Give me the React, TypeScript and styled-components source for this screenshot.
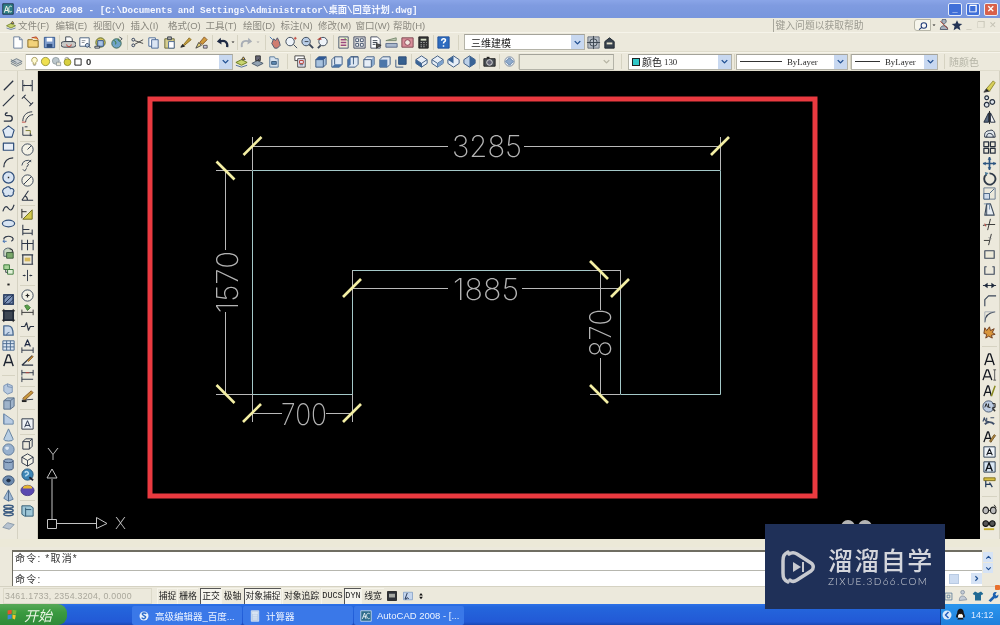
import React from "react";
import styled, { createGlobalStyle } from "styled-components";

const Global = createGlobalStyle`
  html, body { margin: 0; padding: 0; background: #ece9d8; overflow: hidden; }
  * { box-sizing: border-box; }
`;

const CJK = `"Liberation Sans", "Noto Sans CJK SC", sans-serif`;
const MONO = `"Liberation Mono", "Noto Sans CJK SC", monospace`;

type P = [string, string?, string?, number?];
const D = "#3c4450", B = "#3f6db0", G = "#8a8f98", LB = "#b9cde6", R = "#c0443c", GR = "#4d9a45";
const I: Record<string, P[]> = {
  doc: [["M4 2h6l3 3v9H4z", "#6c7f9a", "#fff"], ["M10 2v3h3", "#6c7f9a"]],
  open: [["M2 5h5l1 1h5v7H2z", "#8a6a1e", "#f2d27a"], ["M6 3l5-1 2 3", "#b23c2c", "#e8a040"]],
  save: [["M2.5 2.5h11v11h-11z", "#31568f", "#7e9ccb"], ["M5 3h6v4H5z", "", "#fff"], ["M5 9.5h6v4H5z", "", "#2f4f80"]],
  plot: [["M5 2h5l2 2v3H5z", D, "#fff"], ["M3 7h10a1.5 1.5 0 0 1 0 6H3a1.5 1.5 0 0 1 0-6z", D, "#c9c9c6"], ["M6 10a2.5 2.5 0 1 0 5 0", R]],
  preview: [["M3 3h10v9H3z", "#48607f", "#fff"], ["M5 6h4M5 8h3", G], ["M11 9a2 2 0 1 0 .01 0zM12.5 12l2 2", "#2a3d5c", LB]],
  publish: [["M3 8a5 5 0 1 1 10 0a5 5 0 1 1-10 0z", "#5b6a2c", "#d4c25a"], ["M5 6h6v6H5z", "#34558f", "#a9c3e6"], ["M2 12h5v2H2z", D, "#ddd"]],
  web: [["M3 9a5 5 0 1 1 10 0a5 5 0 1 1-10 0z", "#3f6a55", "#6fa3c8"], ["M5 6c2 0 3 2 2 4M10 4c-1 2 1 3 2 3", "#3c7a35"], ["M11 2l3 2-2 2", D]],
  cut: [["M2 5a1.5 1.5 0 1 0 3 0a1.5 1.5 0 1 0-3 0zM2 11a1.5 1.5 0 1 0 3 0a1.5 1.5 0 1 0-3 0z", "#2c3a55"], ["M5 6l9 3M5 10l9-5", "#444"]],
  copy: [["M3 3h7v9H3z", "#4c6a96", "#fff"], ["M6 5h7v9H6z", "#4c6a96", "#dbe6f4"]],
  paste: [["M3 4h10v10H3z", "#6a6a3c", "#d8cf8f"], ["M6 2h4v3H6z", D, "#aaa"], ["M7 7h6v7H7z", "#4c6a96", "#fff"]],
  brush: [["M3 13l2-3 2 2z", "#222", "#222"], ["M6 10l6-7 2 2-7 6z", "#8a6a1e", "#c8a23c"]],
  match: [["M2 14l3-6 3 3z", "#444", "#e8d67a"], ["M6 8l5-6 3 3-5 5z", "#8a5a2c", "#d09a3c"], ["M10 11h4v3h-4z", "#555", "#c8c0e0"]],
  undo: [["M13 13c1-6-3-8-8-6", "#1f2a44", "", 2.4], ["M6 3L2 7l5 3z", "", "#1f2a44"]],
  redo: [["M3 13C2 7 6 5 11 7", "#a8adb5", "", 2], ["M10 3l4 4-5 3z", "", "#a8adb5"]],
  caret: [["M5 7h6l-3 3z", "", "#222"]],
  caretOff: [["M5 7h6l-3 3z", "", "#aaa"]],
  pan: [["M4 9l2-5 2 2 2-3 2 4 1 4-3 3H7z", "#49586f", "#cf7c70"], ["M2 2l3 3", B]],
  zoomrt: [["M2 7a4.5 4.5 0 1 0 9 0a4.5 4.5 0 1 0-9 0zM10 10l4 4", "#3a4658", "#eef3f8"], ["M12 2v3M10.5 3.5h3", R]],
  zoomwin: [["M2 7a4.5 4.5 0 1 0 9 0a4.5 4.5 0 1 0-9 0z", "#3a4658", LB], ["M10 10l4 4", "#3a4658", "", 2], ["M5 7h4", D]],
  zoomprev: [["M3 7a4.5 4.5 0 1 0 9 0a4.5 4.5 0 1 0-9 0z", "#3a4658", "#eef3f8"], ["M5 11L2 14", "#3a4658", "", 2], ["M1 5l4-3 1 3z", "", "#b04038"]],
  props: [["M3 2h10v12H3z", "#49586f", "#f2ecd4"], ["M5 5h6M5 8h6M5 11h6", "#9a4a80", "", 1.6], ["M9 3l3 3", GR]],
  design: [["M2 2h12v12H2z", "#444c60", "#ddd"], ["M4 4h3v3H4zM9 4h3v3H9zM4 9h3v3H4zM9 9h3v3H9z", "#49586f", "#fff"]],
  sheet: [["M3 2h7l3 3v9H3z", "#444c60", "#fff"], ["M5 6h5M5 8h5M5 10h3", D], ["M9 9l5 2-5 3z", "#333", "#555"]],
  tool: [["M2 6l11-3v3z", "#7a8a70", "#bcc8b0"], ["M2 9h12v4H2z", "#5d6c8a", "#aab8cc"]],
  markup: [["M2 3h12v10H2z", "#7c4850", "#d88c98"], ["M5 8a3 3 0 1 1 6 0a3 3 0 1 1-6 0z", "#884050", "#f3e6e0"]],
  calc: [["M3 2h10v12H3z", "#222", "#333"], ["M5 4h6v2H5z", "", "#d8e0c8"], ["M5 8h1M8 8h1M11 8h.5M5 10.5h1M8 10.5h1M11 10.5h.5M5 12.5h1M8 12.5h1", "#eee"]],
  help: [["M2 2h12v12H2z", "#1f4f9a", "#2e6cc0"], ["M6 6c0-3 5-2.5 4 0-.5 1.2-2 1.2-2 3M8 11v1.5", "#fff", "", 1.6]],
  wsset: [["M2 2h12v12H2z", "#66707c", "#b8bfc6"], ["M4 8a4 4 0 1 0 8 0a4 4 0 1 0-8 0zM8 1v14M1 8h14", "#3b454f"]],
  wsfull: [["M3 7l5-4 5 4v7H3z", "#1f2730", "#39434f"], ["M5 8h6v2H5z", "", "#e6e2cc"]],
  layers: [["M8 5l6 3-6 3-6-3z", "#6c7a84", "#c9ced2"], ["M2 10l6 3 6-3", "#6c7a84"], ["M2 6l6 3", "#6c7a84"]],
  layerset: [["M2 9l6-3 6 3-6 3z", "#66781c", "#c8d470"], ["M2 12l6 2 6-2", "#4a6a9a"], ["M10 3l2 3h-4z", "#444", "#f0c040"]],
  layerprev: [["M2 10l6-3 6 3-6 3z", "#4c5a6a", "#93a3b3"], ["M6 2h5v5H6z", "#333", "#667"], ["M8 7l2-2", "#333"]],
  layeriso: [["M4 3h5l1 2h3v9H4z", "#597a9a", "#d6e2ee"], ["M6 8h5v3H6z", "#3a5a7a", "#5f8ab4"]],
  view: [["M2 2h10v5H2z", "#444", "#fff"], ["M5 5h8v9H5z", "#444", "#eef"], ["M7 7h4v3H7z", "#b03a2e"], ["M7 11.5h4", D]],
  cTop: [["M3 6l3-3h8v8l-3 3H3z", "#3d5a80", "#a8c2de"], ["M3 6h8v8M11 6l3-3", "#3d5a80"], ["M3 6l3-3h8l-3 3z", "", "#2f5a96"]],
  cBot: [["M3 6l3-3h8v8l-3 3H3z", "#3d5a80", "#dfe8f3"], ["M3 14l3-3h8l-3 3z", "", "#4a74a8"], ["M6 3v8", "#3d5a80"]],
  cLeft: [["M3 6l3-3h8v8l-3 3H3z", "#3d5a80", "#dfe8f3"], ["M3 6l3-3v8l-3 3z", "", "#4a74a8"], ["M9 3v8M6 3h8", "#3d5a80"]],
  cRight: [["M3 6l3-3h8v8l-3 3H3z", "#3d5a80", "#e7eef7"], ["M11 6l3-3v8l-3 3z", "", "#88a8cc"], ["M3 6h8v8", "#3d5a80"]],
  cFront: [["M3 6l3-3h8v8l-3 3H3z", "#3d5a80", "#dfe8f3"], ["M3 6h8v8H3z", "", "#4c76aa"]],
  cBack: [["M6 3h8v8H6z", "#2c4c78", "#36608f"], ["M3 6v8h8", "#3d5a80"]],
  d1: [["M8 2l6 4v4l-6 4-6-4V6z", "#3d5a80", "#e7eef7"], ["M2 6l6 4 6-4M8 10v4", "#3d5a80"], ["M2 6l6 4v4l-6-4z", "", "#3a6496"]],
  d2: [["M8 2l6 4v4l-6 4-6-4V6z", "#3d5a80", "#e7eef7"], ["M2 6l6 4 6-4M8 10v4", "#3d5a80"], ["M8 10l6-4v4l-6 4z", "", "#7ea2cc"]],
  d3: [["M8 2l6 4v4l-6 4-6-4V6z", "#3d5a80", "#e7eef7"], ["M2 6l6-4v4v4z", "", "#3a6496"]],
  d4: [["M8 2l6 4v4l-6 4-6-4V6z", "#3d5a80", "#bcd0e8"], ["M8 2l6 4v4l-6 4z", "", "#3a6496"]],
  camera: [["M2 5h12v8H2z", "#222", "#4a4f55"], ["M5 9a3 3 0 1 0 6 0a3 3 0 1 0-6 0z", "#ddd", "#667"], ["M5 3h3v2H5z", "", "#222"]],
  vp: [["M3 8a5 5 0 1 0 10 0a5 5 0 1 0-10 0z", "#7b8aa0", "#e7ebf0"], ["M8 4l4 4-4 4-4-4z", "#5d7fa8", "#8faacc"]],
  line: [["M3 13L13 3", "#2b3444", "", 1.4]],
  xline: [["M2 14L14 2", "#2b3444", "", 1.4]],
  pline: [["M3 13h6c4 0 4-6 0-6H6c-2 0-2-3 1-3", "#2b3444", "", 1.4]],
  polygon: [["M8 2l6 4.5-2.3 7.5H4.3L2 6.5z", "#2f4e7a", "#dfe9f5", 1.2]],
  rect: [["M2.5 4.5h11V12h-11z", "#2f4e7a", "#e8eef6", 1.3]],
  arc: [["M3 13C3 7 7 3 13 3", "#2b3444", "", 1.4]],
  circle: [["M2 8a6 6 0 1 0 12 0a6 6 0 1 0-12 0z", "#2f4e7a", "#d8e4f2", 1.3], ["M8 7.2v1.6", "#222", "", 1.5]],
  cloud: [["M5 3c2-2 5-1 5 1 3-1 5 2 3 4 1 3-3 5-5 3-2 2-6 1-5-2-2-1-2-5 2-6z", "#2f4e7a", "#d8e4f2", 1.2]],
  spline: [["M2 11c2-6 4-6 6-3s4 2 6-4", "#2b3444", "", 1.2]],
  ellipse: [["M1.5 8a6.5 3.5 0 1 0 13 0a6.5 3.5 0 1 0-13 0z", "#2f4e7a", "#d8e4f2", 1.3]],
  ellarc: [["M3 9a5 3 0 1 1 8 2", "#2b3444", "", 1.3], ["M6 11H2M4 9.5L2 11l2 1.5", B]],
  insert: [["M3 5a5 4 0 0 1 9-1v7H3z", "#546070", "#c8d6c0", 1], ["M6 7h7v6H6z", "#3a5a3a", "#7aa86a"], ["M9 3a4 4 0 0 1 4 4", "#333"]],
  block: [["M3 3h6v5H3z", "#3b7b3b", "#a8d498"], ["M7 8h6v5H7z", "#3b7b3b", "#e0f0d8"], ["M5 8v3h2", D]],
  dot: [["M8 7v2", "#222", "", 2.4]],
  hatch: [["M3 3h10v10H3z", "#35486a", "#7d93b8", 1.8], ["M3 8l5-5M8 13l5-5M3 13L13 3", "#1d2f50"]],
  gradient: [["M3 3h10v10H3z", "#222b3a", "#3e4754", 1.8], ["M1 3h2M13 3h2M1 13h2M13 13h2M3 1v2M13 1v2M3 13v2M13 13v2", "#222"]],
  region: [["M3 13V3h5c4 0 5 5 5 10z", "#4a6a90", "#c9d8ea", 1.4], ["M6 13a3 3 0 0 1 3-3", "#4a6a90"]],
  table: [["M2 3h12v10H2z", "#4a6a90", "#dce7f3"], ["M2 6h12M2 9.5h12M6 3v10M10 3v10", "#4a6a90"]],
  textA: [["M3 14L7 2h2l4 12M5 10h6", "#1c2330", "", 1.6]],
  box1: [["M7 3l5 2v7l-5 2-4-3V5z", "#7b93b4", "#b7c9df"], ["M7 3v3l5 1", "#7b93b4"]],
  box2: [["M3 5l4-3h7v9l-4 3H3z", "#5a6f8a", "#9fb3ca"], ["M3 5h7v9M10 5l4-3", "#5a6f8a"]],
  wedge: [["M3 3l10 7v4H3z", "#6a86a8", "#b9cce3"], ["M3 3v11", "#6a86a8"]],
  cone: [["M8 2l5 11a5 2 0 0 1-10 0z", "#62809e", "#b9cfe4"]],
  sphere: [["M2 8a6 6 0 1 0 12 0a6 6 0 1 0-12 0z", "#5e7a9a", "#97b0cd"], ["M5 5a2 2 0 1 0 3 0z", "", "#dde7f2"]],
  cyl: [["M3 4a5 2 0 0 1 10 0v8a5 2 0 0 1-10 0z", "#41587a", "#8fa8c6"], ["M3 4a5 2 0 0 0 10 0", "#41587a"]],
  torus: [["M2 8a6 5 0 1 0 12 0a6 5 0 1 0-12 0z", "#3e5678", "#6d8bae"], ["M6 8a2 1.5 0 1 0 4 0a2 1.5 0 1 0-4 0z", "#20314a", "#1f2e44"]],
  pyramid: [["M8 2l5 10-5 2-5-3z", "#5e7c9e", "#9fb9d4"], ["M8 2v12", "#486484"]],
  helix: [["M3 4c0-2 10-2 10 0s-10 2-10 0M3 8c0-2 10-2 10 0s-10 2-10 0M3 12c0-2 10-2 10 0s-10 2-10 0", "#3a5a80", "", 1.6]],
  plane: [["M2 10l5-5 7 2-5 5z", "#8897a8", "#b7c3d0"]],
  dLinear: [["M3 2v12M13 2v12M3 8h10", "#2b3444", "", 1.1], ["M3 8l2-1v2zM13 8l-2-1v2z", "", "#2b3444"]],
  dAligned: [["M2 6l4-4M10 14l4-4M4 4l8 8", "#2b3444", "", 1.1]],
  dArc: [["M3 13C3 7 7 3 13 3", "#2b3444"], ["M6 14C6 10 10 6 14 6", "#2b3444"], ["M2 14h4", R]],
  dOrd: [["M3 3v9h10", "#2b3444"], ["M6 7h5v4", "#7a7a2a"], ["M5 3h3M11 13v-3", "#2b3444"]],
  dRad: [["M2 8a6 6 0 1 0 12 0a6 6 0 1 0-12 0z", "#3a4658", "#f4f2e6"], ["M8 8l4-4", "#2b3444"]],
  dJog: [["M2 8a6 6 0 0 1 10-4", "#3a4658"], ["M7 10l2-3-1-1 4-4", "#2b3444"], ["M3 12l2 2 2-3", "#3a4658"]],
  dDia: [["M2 8a6 6 0 1 0 12 0a6 6 0 1 0-12 0z", "#3a4658", "#f4f2e6"], ["M4 12l8-8", "#2b3444"]],
  dAng: [["M2 13h12M2 13L9 3M5 8c2 1 3 3 3 5", "#2b3444", "", 1.1]],
  dQuick: [["M3 13L13 3v10z", "#6b6b1f", "#d4ca4c"], ["M2 2v10M2 5h5", "#222"]],
  dBase: [["M3 3v11M13 8v6M3 12h10M3 8h7", "#2b3444", "", 1.1]],
  dCont: [["M2 3v11M8 3v11M14 3v11M2 7h12", "#2b3444", "", 1.1]],
  dSpace: [["M2 3h12M2 13h12M3 3v10M13 3v10", "#2b3444", "", 1.2], ["M5 6h6v4H5z", "", "#d8b95c"]],
  dBreak: [["M3 8h3M10 8h3M8 2v12", "#2b3444"], ["M3 8l2-1v2zM13 8l-2-1v2z", "", "#2b3444"]],
  dCenter: [["M2 8a6 6 0 1 0 12 0a6 6 0 1 0-12 0z", "#3a4658", "#f4f2e6"], ["M6 8h4M8 6v4", "#222", "", 1.3]],
  dInspect: [["M2 10h12M2 7v6M14 7v6", "#333"], ["M5 3l3-1 3 3-3 3z", "#3c7a35", "#5ca04a"]],
  dJogLine: [["M1 8h4l2-4 2 8 2-4h4", "#2b3444", "", 1.2]],
  dText: [["M2 13h12M2 10v6M14 10v6", "#2b3444"], ["M5 9l3-7 3 7M6 7h4", "#1f2a44", "", 1.3]],
  dAngEdit: [["M2 13h12M2 13L13 3", "#2b3444", "", 1.3], ["M8 8l5-5 1 1-5 5z", "#8a5a2c", "#c89a3c"]],
  dUpdate: [["M2 12h12M2 9v6", "#2b3444"], ["M2 5h12M2 2v6M14 2v6", "#2b3444"], ["M6 5h4", R]],
  dStyle: [["M2 13l12-1", "#2b3444"], ["M3 11l9-8 2 2-9 8z", "#8a5a2c", "#c89a3c"], ["M2 14h5", "#222", "", 2]],
  frameA: [["M2 3h12v11H2z", "#2b3444", "#eef2f6"], ["M5 12l3-7 3 7M6 10h4", "#1f2a44"]],
  wire1: [["M3 6l3-3h7v8l-3 3H3z", "#2b3444"], ["M3 6h7v8M10 6l3-3", "#2b3444"]],
  wire2: [["M8 2l6 3.5v6L8 15l-6-3.5v-6z", "#2b3444", "#f4f2e6"], ["M2 5.5L8 9l6-3.5M8 9v6", "#2b3444"]],
  globeC: [["M2 8a6 6 0 1 0 12 0a6 6 0 1 0-12 0z", "#28567a", "#3d86b6"], ["M5 6c2-2 4-1 4 1s-3 1-3 3", "#b8dcef", "", 1.6], ["M10 11l4 3", "#223", "", 2]],
  render: [["M1 9a7 5.5 0 1 0 14 0a7 5.5 0 1 0-14 0z", "#4e3e88", "#5a48b0"], ["M3 7a5 3.5 0 0 1 10 0z", "", "#e8b830"]],
  camBook: [["M2 3h9l3 2v9H5l-3-2z", "#2f5a72", "#9ec6d6"], ["M6 5v9M6 7h6", "#2f5a72"]],
  erase: [["M2 14l3-4 3 3z", "#444", "#222"], ["M5 10l7-8 2 2-6 9z", "#8f8a2e", "#d8cf58"]],
  eCopy: [["M5 2a2 2 0 1 1-.01 0zM11 6a2.5 2.5 0 1 1-.01 0zM5 9a2.5 2.5 0 1 1-.01 0z", "#263040", "#dfe5ea", 1.3]],
  mirror: [["M8 1v14", "#222", "", 1], ["M7 3v10H2z", "#1f2a3c", "#5a6a80"], ["M9 3v10h5z", "#1f2a3c", "#f2f2f2"]],
  offset: [["M3 13c-1-4 1-7 5-7 4-2 6 2 6 7z", "#1f2a3c", "#dfe5ea"], ["M5 13c0-3 1-4 3-4s4 1 4 4", "#1f2a3c"]],
  array: [["M2 2h5v5H2zM9 2h5v5H9zM2 9h5v5H2zM9 9h5v5H9z", "#27303e", "", 1.3]],
  move: [["M8 1v14M1 8h14", "#2c5580", "", 1.8], ["M8 1L6 4h4zM8 15l-2-3h4zM1 8l3-2v4zM15 8l-3-2v4z", "", "#2c5580"]],
  rotate: [["M5 3.5a6 6 0 1 0 3-1", "#2f3a48", "", 2], ["M3 1l4 1-3 3z", "", "#4a7a9a"]],
  scale: [["M2 2h12v12H2z", "#6a7c90"], ["M2 8h6v6H2z", "#4a6484", "#cfdcec"], ["M8 8l5-5", "#4a6484"]],
  stretch: [["M5 2h4l4 12H3z", "#3c4a5c", "#e6ecf2", 1.2], ["M5 2v12", "#3c4a5c"], ["M2 2h6v6", "#7790aa"]],
  trim: [["M1 9l5-1h8", "#333", "", 1], ["M9 2L6 14", "#333"], ["M3 7l1 3", R]],
  extend: [["M2 9h6", "#333", "", 1], ["M10 2L7 14", "#333"], ["M7 6l3 1", "#888"]],
  breakPt: [["M3 4h10v8H3z", "#3a4658", "#ece9d8", 1.2]],
  breakRect: [["M5 4H3v8h10V4h-2", "#3a4658", "", 1.2]],
  join: [["M1 8h14", "#1f2a3c", "", 1], ["M2 8l4-3v6zM14 8l-4-3v6z", "", "#1f2a3c"]],
  chamfer: [["M3 14V7l4-4h8", "#3a4658", "", 1.2]],
  fillet: [["M3 14c0-7 4-10 11-11", "#3a4658", "", 1.2], ["M3 14V3h11", "#a8adb5"]],
  explode: [["M3 4l2 3 3-4 1 4 4-2-2 4 3 2-4 1 1 3-4-2-3 2 1-4-3-1z", "#6e3c1e", "#d8963c"]],
  tA: [["M3 14L7 2h2l4 12M5 10h6", "#12161e", "", 1.5]],
  tAI: [["M1 14L5 3h1.5l4 11M3 10.5h5.5", "#12161e", "", 1.4], ["M12 3h3M12 14h3M13.5 3v11", "#555"]],
  tAS: [["M2 14L6 3h1l3 11M3.5 10h5", "#12161e", "", 1.4], ["M10 14l4-11", "#8a8a20", "", 1.6]],
  abc: [["M1 9a6 6 0 1 0 12 0a6 6 0 1 0-12 0z", "#4a5a70", "#bccbe0"], ["M3 10l1.5-4L6 10M7 6v4h2M11 6h3v4h-3", "#222"], ["M11 11l3 3", "#333", "", 1.6]],
  ABC: [["M1 9l1.5-4L4 9M5 5v4h2.5M9 5h4", "#40506a", "", 1.2], ["M3 12c3-3 7-3 10 0", "#40506a", "", 2]],
  tEdit: [["M2 14L6 3h1l3 11M3.5 10h5", "#12161e", "", 1.4], ["M8 13l5-7 1.5 1-5 7z", "#7a5a2c", "#b08c3c"]],
  fA1: [["M2 3h12v11H2z", "#2a3c52", "#eef3f8"], ["M5 12l3-7 3 7M6 10h4", "#12161e", "", 1.1]],
  fA2: [["M2 3h12v11H2z", "#2a3c52", "#d8e6f4"], ["M4 13l3.5-9 3.5 9M5.5 10h4", "#12161e", "", 1.5]],
  tTable: [["M2 3h12v3H2z", "#7e6e1e", "#d8c040"], ["M4 6v7M4 10h6M8 8l3 5", "#233a5a", "", 1.3]],
  ref1: [["M1 9a3 3.5 0 1 0 6 0a3 3.5 0 1 0-6 0zM9 9a3 3.5 0 1 0 6 0a3 3.5 0 1 0-6 0z", "#222", "#bbb", 1.2], ["M7 9h2M13 3l2 3", "#222"]],
  ref2: [["M1 7a3 3 0 1 0 6 0a3 3 0 1 0-6 0zM8 7a3 3 0 1 0 6 0a3 3 0 1 0-6 0z", "#111", "#555", 1.2], ["M2 12h11v2H2z", "", "#c8b030"]],
  bulb: [["M8 2a4 4 0 0 1 2 7.5V12H6V9.5A4 4 0 0 1 8 2z", "#8a7a30", "#fffbd0"], ["M6.5 13.5h3", "#777"]],
  sun: [["M2 8a6 6 0 1 0 12 0a6 6 0 1 0-12 0z", "#7a7a20", "#f0e050"]],
  frz: [["M2 7a5 5 0 1 0 10 0a5 5 0 1 0-10 0z", "#7f8a90", "#bcc7cc"], ["M8 9h6v5H8z", "#7f8a90", "#ece9d8"]],
  lock: [["M3 9a5 5 0 1 0 10 0a5 5 0 1 0-10 0z", "#7a7a20", "#d8d040"], ["M4 5a3 3 0 0 1 6 0", "#777"]],
  sq: [["M3 3h10v10H3z", "#111", "#fff", 1.4]],
  search: [["M6 8a4 4 0 1 0 8 0a4 4 0 1 0-8 0zM6.5 11L3 14", "#1f3a78", "#f6f6f6", 1.5]],
  comm: [["M5 3a3 3 0 1 1 6 0c0 2-3 4-3 4S5 5 5 3zM3 14c0-4 3-5 5-5s5 1 5 5z", "#3a4658", "#a8b0bc", 1], ["M3 3l10 10", "#b03020"]],
  star: [["M8 1.5l2 4.5 5 .5-3.8 3.2 1.3 5.3L8 12.3 3.5 15l1.3-5.3L1 6.5 6 6z", "", "#243454"]],
  cmdIcon: [["M2 2h12v12H2z", "#111", "#2e3138"], ["M4 5h8v5H4z", "", "#a6a8a2"]],
  annot: [["M2 3h12v10H2z", "#7f9cc4", "#c5d6ee"], ["M7 4l-3 8h2l1-2 2 2", "#1a2a4a", "", 1.2]],
  arrowsV: [["M8 3l3 4H5zM8 13l3-4H5z", "", "#111"]],
  trayA: [["M3 3h10v10H3z", "#42698e"], ["M6 6h4v4H6z", "#42698e"]],
  trayB: [["M5 3a2.5 2.5 0 1 1 5 0a2.5 2.5 0 1 1-5 0zM3 14c0-4 2-6 4-6s5 1 6 5z", "#7c8a9c", "#c5ccd6"]],
  shirt: [["M4 2l4 2 4-2 3 3-2 2-1-1v8H4V6L3 7 1 5z", "", "#216a94"]],
  wrench: [["M2 14l6-6c-1-3 1-6 5-5l-2 3 2 2 2-2c1 3-2 6-5 5l-5 5z", "", "#1d62b0"]],
  start: [["M2 3l5-1v5l-5 1z", "", "#e8552c"], ["M8 2l5 1-1 5-4-1z", "", "#78b83a"], ["M2 9l5-1v5l-5 1z", "", "#3a86d8"], ["M8 8l4 1-1 5-3-1z", "", "#f4c430"]],
  sogou: [["M2 8a6 6 0 1 0 12 0a6 6 0 1 0-12 0z", "", "#eaf2fb"], ["M11 5C9 3 5 4 6 6s5 2 4 4-4 2-5 0", "#2b6ccc", "", 2]],
  calcDoc: [["M3 1h10v14H3z", "#dfe8f4", "#b8cbe5"], ["M5 3h6v2H5zM5 7h6M5 9.5h6M5 12h6", "#eff4fb"]],
  acad: [["M1 1h14v14H1z", "#d8e6f3", "#2e6c8c"], ["M3 12l3-8 2 8M4 9h4M13 5c-3-2-5 1-4 4s3 3 4 2", "#f0f5f8", "", 1.1]],
  acad0: [["M1 1h14v14H1z", "#123", "#2f7f86"], ["M3 13l3-9 3 9M4 10h4M13 5c-2-2-4 0-4 3s2 5 4 3", "#f6f6e8", "", 1.3]],
  qq: [["M8 1c3 0 4 3 4 5 1 2 2 4 1 6l-1-1c-.5 1.5-1 2-1 2l1 1H4l1-1s-.5-.5-1-2l-1 1c-1-2 0-4 1-6 0-2 1-5 4-5z", "", "#15151a"], ["M5 9c1-2 5-2 6 0v3H5z", "", "#fff"], ["M6 6.5c1 1 3 1 4 0L8 8z", "", "#f0a020"]],
  backArrow: [["M2 8a6 6 0 1 0 12 0a6 6 0 1 0-12 0z", "", "#dbe9fb"], ["M10 4L6 8l4 4", "#235fbf", "", 2]],
  chevL: [["M4 10l4-4 4 4", "#1f4f92", "", 2]],
  chevD: [["M4 6l4 4 4-4", "#1f4f92", "", 2]],
  chevR: [["M6 4l4 4-4 4", "#1f4f92", "", 2]],
  chevGray: [["M4 6l4 4 4-4", "#b6b4a4", "", 2]],
};

const Svg = styled.svg<{ $s: number }>`
  width: ${(p) => p.$s}px;
  height: ${(p) => p.$s}px;
  flex: none;
  display: block;
`;

function Icon({ n, s = 15 }: { n: string; s?: number }) {
  return (
    <Svg $s={s} viewBox="0 0 16 16">
      {(I[n] || []).map(([d, st, f, w], i) => (
        <path key={i} d={d} stroke={st || "none"} fill={f || "none"} strokeWidth={w ?? 1} strokeLinejoin="round" />
      ))}
    </Svg>
  );
}

const Root = styled.div`
  width: 1000px;
  height: 625px;
  position: relative;
  overflow: hidden;
  display: flex;
  flex-direction: column;
  background: #ece9d8;
  font-family: ${CJK};
  filter: blur(0.45px);
`;
const TitleBar = styled.div`
  height: 18px;
  display: flex;
  align-items: center;
  padding: 0 2px;
  color: #f4f7ff;
  background: linear-gradient(#8aa5e8 0, #7f9be0 30%, #7896dd 100%);
  font: bold 9.3px ${MONO};
  gap: 2px;
`;
const TitleText = styled.span`
  flex: 1;
  white-space: nowrap;
`;
const WinBtn = styled.div<{ $bg: string }>`
  width: 14px;
  height: 13px;
  margin-left: 2px;
  border: 1px solid #e6ecfa;
  border-radius: 2px;
  background: ${(p) => p.$bg};
  color: #fff;
  font: bold 9px/11px "Liberation Sans", sans-serif;
  text-align: center;
`;
const MenuBar = styled.div`
  height: 14px;
  display: flex;
  align-items: center;
  background: #ece9dc;
  font-size: 9.5px;
  color: #8a887f;
  padding-left: 3px;
`;
const MenuStart = styled.div`
  width: 15px;
  flex: none;
  display: flex;
  justify-content: center;
`;
const MenuItem = styled.span`
  width: 37.5px;
  flex: none;
  white-space: nowrap;
`;
const HelpBox = styled.div`
  margin-left: 342px;
  width: 130px;
  height: 13px;
  border-left: 1px solid #a8a79c;
  padding-left: 2px;
  line-height: 13px;
  color: #9b9a90;
  font-size: 9.8px;
  white-space: nowrap;
`;
const HelpTools = styled.div`
  display: flex;
  align-items: center;
  margin-left: auto;
  padding-right: 1px;
`;
const HelpSearch = styled.div`
  width: 17px;
  height: 12px;
  border: 1px solid #b7b6a8;
  border-radius: 3px 0 0 3px;
  background: #f6f5ec;
  display: flex;
  align-items: center;
  justify-content: center;
`;
const FadedCtl = styled.span`
  width: 12px;
  text-align: center;
  color: #c4c2b4;
  font-size: 9px;
`;
const ToolRow = styled.div<{ $h: number; $pl: number }>`
  height: ${(p) => p.$h}px;
  padding-left: ${(p) => p.$pl}px;
  display: flex;
  align-items: center;
  background: #ece9dc;
  border-top: 1px solid #f6f4ea;
  border-bottom: 1px solid #dfdccc;
`;
const Slot = styled.div<{ $w?: number }>`
  width: ${(p) => p.$w ?? 16}px;
  height: 16px;
  flex: none;
  display: flex;
  align-items: center;
  justify-content: center;
`;
const Sep = styled.div<{ $w: number }>`
  width: ${(p) => p.$w}px;
  flex: none;
  height: 15px;
  position: relative;
  &::after {
    content: "";
    position: absolute;
    left: 50%;
    top: 0;
    bottom: 0;
    width: 1px;
    background: #d6d3c2;
  }
`;
const Combo = styled.div<{ $w: number; $off?: boolean }>`
  width: ${(p) => p.$w}px;
  height: 16px;
  flex: none;
  display: flex;
  align-items: center;
  background: ${(p) => (p.$off ? "#ebe9dc" : "#fff")};
  border: 1px solid #b4b3a8;
  border-top-color: #a4a39a;
  font-size: 10px;
  color: #222;
  padding-left: 3px;
  gap: 2px;
  white-space: nowrap;
  overflow: hidden;
`;
const LayerIcons = styled.div`
  display: flex;
  align-items: center;
  margin-right: 1px;
`;
const ComboText = styled.span`
  margin-left: 3px;
`;
const ComboArrow = styled.div<{ $off?: boolean }>`
  width: 13px;
  height: 14px;
  margin-left: auto;
  flex: none;
  background: ${(p) => (p.$off ? "#ebe9dc" : "#c8d8f0")};
  display: flex;
  align-items: center;
  justify-content: center;
`;
const Swatch = styled.span`
  width: 8px;
  height: 8px;
  background: #30c8c8;
  border: 1px solid #222;
  flex: none;
`;
const LineSample = styled.span<{ $w: number }>`
  width: ${(p) => p.$w}px;
  height: 1px;
  background: #333;
  margin-right: 3px;
  flex: none;
`;
const SerifLabel = styled.span`
  font-family: "Liberation Serif", "Noto Sans CJK SC", serif;
  font-size: 8.8px;
  color: #2a2a2a;
`;
const ZeroLabel = styled.span`
  font-size: 9.5px;
  font-weight: bold;
  color: #333;
`;
const DisabledLabel = styled.span`
  font-size: 10px;
  color: #b5b4a6;
`;
const Work = styled.div`
  height: 468px;
  display: flex;
`;
const Dock = styled.div<{ $w: number; $pt: number }>`
  width: ${(p) => p.$w}px;
  flex: none;
  padding-top: ${(p) => p.$pt}px;
  display: flex;
  flex-direction: column;
  align-items: center;
  background: #ece9dc;
  border-right: 1px solid #d5d2c2;
`;
const DockSlot = styled.div`
  height: 15.3px;
  flex: none;
  display: flex;
  align-items: center;
  justify-content: center;
`;
const DockGap = styled.div<{ $h: number }>`
  height: ${(p) => p.$h}px;
  flex: none;
  align-self: stretch;
  position: relative;
  &::after {
    content: "";
    position: absolute;
    left: 2px;
    right: 2px;
    top: 50%;
    height: 1px;
    background: #d6d3c2;
  }
`;
const Canvas = styled.svg`
  flex: 1;
  min-width: 0;
  height: 100%;
  background: #000;
  display: block;
`;
const DimText = styled.text`
  font-family: "Inter", "Lato", sans-serif;
  font-weight: 200;
  font-size: 30px;
  fill: #b4b4b4;
`;
const AxisText = styled.text`
  font-family: "Inter", "Lato", sans-serif;
  font-weight: 200;
  font-size: 16px;
  fill: #c4c4c4;
`;
const CommandArea = styled.div`
  height: 39px;
  margin-top: 8px;
  padding: 3px 0 0 12px;
  display: flex;
  background: #ece9dc;
`;
const CommandBox = styled.div`
  flex: 1;
  min-width: 0;
  display: flex;
  flex-direction: column;
  background: #fff;
  border-top: 2px solid #6f6d62;
  border-left: 1px solid #6f6d62;
  font-size: 10px;
  color: #333;
`;
const History = styled.div`
  height: 21px;
  padding: 1px 0 0 2px;
  line-height: 12px;
  border-bottom: 1px solid #b6b6ae;
  letter-spacing: 1.2px;
`;
const InputRow = styled.div`
  flex: 1;
  display: flex;
  align-items: center;
  padding-left: 2px;
  letter-spacing: 1.2px;
`;
const HScroll = styled.div`
  margin-left: auto;
  display: flex;
  align-items: center;
  gap: 12px;
`;
const HThumb = styled.div`
  width: 10px;
  height: 10px;
  background: #cddcf1;
  border: 1px solid #b8cae2;
`;
const HArrow = styled.div`
  width: 11px;
  height: 11px;
  background: #d6e3f5;
  display: flex;
  align-items: center;
  justify-content: center;
`;
const VScroll = styled.div`
  width: 18px;
  flex: none;
  display: flex;
  flex-direction: column;
  align-items: center;
  gap: 1px;
  padding: 2px 6px 0 0;
`;
const VBtn = styled.div`
  width: 10px;
  height: 10px;
  background: #d6e3f5;
  display: flex;
  align-items: center;
  justify-content: center;
`;
const StatusBar = styled.div`
  height: 18px;
  padding: 1px 0 0 3px;
  display: flex;
  align-items: center;
  background: #ece9dc;
  border-top: 1px solid #d5d2c2;
`;
const Coords = styled.div`
  width: 149px;
  height: 16px;
  margin-right: 5px;
  padding-left: 1px;
  border: 1px solid #dcd9c9;
  font: 8.8px/14px "Liberation Sans", sans-serif;
  color: #aaa89c;
  letter-spacing: 0.25px;
  white-space: nowrap;
`;
const StatusBtn = styled.div<{ $w: number; $on?: boolean; $ml?: number; $latin?: boolean }>`
  width: ${(p) => p.$w}px;
  height: 16px;
  flex: none;
  margin-left: ${(p) => p.$ml ?? 0}px;
  font: ${(p) => (p.$latin ? `8.5px/15px ${MONO}` : `8.8px/15px ${CJK}`)};
  text-align: center;
  white-space: nowrap;
  color: #222;
  background: ${(p) => (p.$on ? "#f6f5ee" : "#ece9dc")};
  border-top: 1px solid ${(p) => (p.$on ? "#555" : "#f6f4ea")};
  border-left: 1px solid ${(p) => (p.$on ? "#555" : "#f6f4ea")};
`;
const StatusTools = styled.div`
  margin-left: auto;
  display: flex;
  align-items: center;
  gap: 1px;
`;
const Taskbar = styled.div`
  height: 21px;
  display: flex;
  align-items: stretch;
  background: linear-gradient(#2c71e8 0, #2466dc 15%, #2259d6 85%, #1b48b4 100%);
  color: #eef4ff;
  font-size: 9.5px;
`;
const StartBtn = styled.div`
  width: 67px;
  flex: none;
  margin-right: 65px;
  display: flex;
  align-items: center;
  gap: 5px;
  padding-left: 6px;
  color: #eaf6e4;
  font: italic 14px "Noto Sans CJK SC", sans-serif;
  background: linear-gradient(#58a858 0, #3a9a40 40%, #2f8a38 100%);
  border-radius: 0 9px 9px 0;
`;
const TaskBtn = styled.div`
  width: 110px;
  margin: 2px 1px 0 0;
  flex: none;
  padding-left: 6px;
  display: flex;
  align-items: center;
  gap: 5px;
  white-space: nowrap;
  overflow: hidden;
  border-radius: 2px;
  background: #3a78e8;
`;
const Tray = styled.div`
  margin-left: auto;
  width: 60px;
  display: flex;
  align-items: center;
  gap: 1px;
  background: linear-gradient(#2a96ee, #1f7fdc);
  border-left: 1px solid #173c8c;
  font-size: 9px;
`;
const TrayTime = styled.span`
  margin-left: 3px;
  color: #dfeaff;
`;
const Watermark = styled.div`
  position: absolute;
  left: 765px;
  top: 524px;
  width: 180px;
  height: 85px;
  background: #1f3058;
  display: flex;
  align-items: center;
  padding-left: 15px;
  gap: 12px;
  color: #d4d6dc;
`;
const WmText = styled.div`
  display: flex;
  flex-direction: column;
  gap: 4px;
`;
const WmTitle = styled.div`
  font: 500 25px/25px "Noto Sans CJK SC", sans-serif;
  letter-spacing: 1.4px;
  white-space: nowrap;
`;
const WmUrl = styled.div`
  font: 300 10px/11px "Lato", sans-serif;
  letter-spacing: 1.38px;
  white-space: nowrap;
`;
const Badge = styled.span`
  position: absolute;
  right: 0;
  top: 585px;
  width: 5px;
  height: 5px;
  background: #e8702c;
  border-radius: 1px;
`;

const menus = ["文件(F)", "编辑(E)", "视图(V)", "插入(I)", "格式(O)", "工具(T)", "绘图(D)", "标注(N)", "修改(M)", "窗口(W)", "帮助(H)"];
const seq = (list: string) => list.split(" ");

function Row({ list }: { list: string }) {
  return (
    <>
      {seq(list).map((n, i) => (
        <Slot key={i}>
          <Icon n={n} />
        </Slot>
      ))}
    </>
  );
}

type DockItem = string | number;
const left1: DockItem[] = [...seq("line xline pline polygon rect arc circle cloud spline ellipse ellarc insert block dot hatch gradient region table textA"), 12, ...seq("box1 box2 wedge cone sphere cyl torus pyramid helix plane")];
const left2: DockItem[] = ["dLinear", "dAligned", "dArc", "dOrd", 3, "dRad", "dJog", "dDia", "dAng", 3, "dQuick", "dBase", "dCont", "dSpace", "dBreak", 5, "dCenter", "dInspect", "dJogLine", 4, "dText", "dAngEdit", "dUpdate", 4, "dStyle", 13, "frameA", 5, "wire1", "wire2", "globeC", "render", 5, "camBook"];
const right: DockItem[] = [...seq("erase eCopy mirror offset array move rotate scale stretch trim extend breakPt breakRect join chamfer fillet explode"), 13, ...seq("tA tAI tAS abc ABC tEdit fA1 fA2 tTable"), 12, "ref1", "ref2"];

function DockList({ items }: { items: DockItem[] }) {
  return (
    <>
      {items.map((it, i) =>
        typeof it === "number" ? (
          <DockGap key={i} $h={it} />
        ) : (
          <DockSlot key={i}>
            <Icon n={it} />
          </DockSlot>
        )
      )}
    </>
  );
}

function Tick({ x, y, dir }: { x: number; y: number; dir: 1 | -1 }) {
  return <line x1={x - 9} y1={y + 9 * dir} x2={x + 9} y2={y - 9 * dir} stroke="#f4efa4" strokeWidth={2.6} />;
}
function Seg({ d }: { d: string }) {
  return <path d={d} stroke="#b9b9b9" strokeWidth={1} fill="none" />;
}

function Drawing() {
  return (
    <Canvas viewBox="38 71 942 468" preserveAspectRatio="none">
      <rect x={150} y={99} width={665} height={397} fill="none" stroke="#ea3a40" strokeWidth={5} />
      <path d="M252.5 170.5H720.5V394.5H620.5V270.5H352.5V394.5H252.5Z" fill="none" stroke="#a4c8c8" strokeWidth={1} />
      <Seg d="M252.5 137V170M720.5 137V170M252 146.5H448M524 146.5H720" />
      <Seg d="M216 170.5H252M216 394.5H252M225.5 170V250M225.5 312V394" />
      <Seg d="M352.5 270V297M620.5 270V297M352 288.5H448M522 288.5H620" />
      <Seg d="M590 270.5H620M590 394.5H620M600.5 270V310M600.5 358V394" />
      <Seg d="M252.5 394V422M352.5 394V422M252 413.5H282M326 413.5H352" />
      <Tick x={252.5} y={146} dir={1} />
      <Tick x={720} y={146} dir={1} />
      <Tick x={225.5} y={170.5} dir={-1} />
      <Tick x={225.5} y={394} dir={-1} />
      <Tick x={352} y={288} dir={1} />
      <Tick x={620} y={288} dir={1} />
      <Tick x={599} y={270} dir={-1} />
      <Tick x={599} y={394} dir={-1} />
      <Tick x={252} y={413} dir={1} />
      <Tick x={352} y={413} dir={1} />
      <DimText x={452} y={157} textLength={70} lengthAdjust="spacingAndGlyphs">3285</DimText>
      <DimText x={453} y={300} textLength={66} lengthAdjust="spacingAndGlyphs">1885</DimText>
      <DimText x={281} y={425} textLength={46} lengthAdjust="spacingAndGlyphs">700</DimText>
      <DimText transform="translate(238 313) rotate(-90)" textLength={62} lengthAdjust="spacingAndGlyphs">1570</DimText>
      <DimText transform="translate(611 357) rotate(-90)" textLength={48} lengthAdjust="spacingAndGlyphs">870</DimText>
      <path d="M47.5 519.5H56.5V528.5H47.5ZM52 519V479M56.5 523.5H96M52 469L47 478H57ZM96.5 517.5L107 523.5L96.5 528.5Z" fill="none" stroke="#c4c4c4" strokeWidth={1} />
      <AxisText x={47} y={460} textLength={12} lengthAdjust="spacingAndGlyphs">Y</AxisText>
      <AxisText x={115} y={529} textLength={11} lengthAdjust="spacingAndGlyphs">X</AxisText>
      <circle cx={848} cy={527} r={7} fill="#b4b4b4" />
      <circle cx={865} cy={527} r={7} fill="#b4b4b4" />
    </Canvas>
  );
}

export default function App() {
  return (
    <Root>
      <Global />
      <TitleBar>
        <Icon n="acad0" s={12} />
        <TitleText>AutoCAD 2008 - [C:\Documents and Settings\Administrator\桌面\回章计划.dwg]</TitleText>
        <WinBtn $bg="#3f6fd8">_</WinBtn>
        <WinBtn $bg="#3f6fd8">❐</WinBtn>
        <WinBtn $bg="#d8604a">✕</WinBtn>
      </TitleBar>
      <MenuBar>
        <MenuStart>
          <Icon n="layerset" s={12} />
        </MenuStart>
        {menus.map((m) => (
          <MenuItem key={m}>{m}</MenuItem>
        ))}
        <HelpBox>键入问题以获取帮助</HelpBox>
        <HelpTools>
          <HelpSearch>
            <Icon n="search" s={11} />
          </HelpSearch>
          <Slot $w={6}>
            <Icon n="caret" s={8} />
          </Slot>
          <Slot $w={13}>
            <Icon n="comm" s={12} />
          </Slot>
          <Slot $w={13}>
            <Icon n="star" s={12} />
          </Slot>
          <FadedCtl>_</FadedCtl>
          <FadedCtl>❐</FadedCtl>
          <FadedCtl>✕</FadedCtl>
        </HelpTools>
      </MenuBar>
      <ToolRow $h={20} $pl={9}>
        <Row list="doc open save" />
        <Sep $w={3} />
        <Row list="plot preview publish web" />
        <Sep $w={5} />
        <Row list="cut copy paste brush match" />
        <Sep $w={5} />
        <Slot><Icon n="undo" /></Slot>
        <Slot $w={6}><Icon n="caret" s={8} /></Slot>
        <Sep $w={2} />
        <Slot><Icon n="redo" /></Slot>
        <Slot $w={8}><Icon n="caretOff" s={8} /></Slot>
        <Sep $w={5} />
        <Row list="pan zoomrt zoomwin zoomprev" />
        <Sep $w={4} />
        <Row list="props design sheet tool markup calc" />
        <Sep $w={4} />
        <Slot><Icon n="help" /></Slot>
        <Sep $w={13} />
        <Combo $w={121}>
          <ComboText>三维建模</ComboText>
          <ComboArrow><Icon n="chevD" s={11} /></ComboArrow>
        </Combo>
        <Row list="wsset wsfull" />
      </ToolRow>
      <ToolRow $h={19} $pl={8}>
        <Slot><Icon n="layers" /></Slot>
        <Sep $w={1} />
        <Combo $w={208}>
          <LayerIcons>
            <Icon n="bulb" s={11} />
            <Icon n="sun" s={11} />
            <Icon n="frz" s={11} />
            <Icon n="lock" s={11} />
            <Icon n="sq" s={10} />
          </LayerIcons>
          <ZeroLabel>0</ZeroLabel>
          <ComboArrow><Icon n="chevD" s={11} /></ComboArrow>
        </Combo>
        <Row list="layerset layerprev layeriso" />
        <Sep $w={11} />
        <Slot><Icon n="view" /></Slot>
        <Sep $w={4} />
        <Row list="cTop cBot cLeft cRight cFront cBack" />
        <Sep $w={5} />
        <Row list="d1 d2 d3 d4" />
        <Sep $w={4} />
        <Slot><Icon n="camera" /></Slot>
        <Sep $w={4} />
        <Slot><Icon n="vp" /></Slot>
        <Sep $w={2} />
        <Combo $w={95} $off>
          <ComboArrow $off><Icon n="chevGray" s={11} /></ComboArrow>
        </Combo>
        <Sep $w={14} />
        <Combo $w={104}>
          <Swatch />
          颜色 <SerifLabel>130</SerifLabel>
          <ComboArrow><Icon n="chevD" s={11} /></ComboArrow>
        </Combo>
        <Sep $w={4} />
        <Combo $w={112}>
          <LineSample $w={42} />
          <SerifLabel>ByLayer</SerifLabel>
          <ComboArrow><Icon n="chevD" s={11} /></ComboArrow>
        </Combo>
        <Sep $w={3} />
        <Combo $w={87}>
          <LineSample $w={25} />
          <SerifLabel>ByLayer</SerifLabel>
          <ComboArrow><Icon n="chevD" s={11} /></ComboArrow>
        </Combo>
        <Sep $w={11} />
        <DisabledLabel>随颜色</DisabledLabel>
      </ToolRow>
      <Work>
        <Dock $w={18} $pt={7}><DockList items={left1} /></Dock>
        <Dock $w={20} $pt={7}><DockList items={left2} /></Dock>
        <Drawing />
        <Dock $w={20} $pt={8}><DockList items={right} /></Dock>
      </Work>
      <CommandArea>
        <CommandBox>
          <History>命令: *取消*</History>
          <InputRow>
            命令:
            <HScroll>
              <HThumb />
              <HArrow><Icon n="chevR" s={9} /></HArrow>
            </HScroll>
          </InputRow>
        </CommandBox>
        <VScroll>
          <VBtn><Icon n="chevL" s={9} /></VBtn>
          <VBtn><Icon n="chevD" s={9} /></VBtn>
        </VScroll>
      </CommandArea>
      <StatusBar>
        <Coords>3461.1733, 2354.3204, 0.0000</Coords>
        <StatusBtn $w={20}>捕捉</StatusBtn>
        <StatusBtn $w={21}>栅格</StatusBtn>
        <StatusBtn $w={21} $on $ml={2}>正交</StatusBtn>
        <StatusBtn $w={22}>极轴</StatusBtn>
        <StatusBtn $w={37} $on $ml={1}>对象捕捉</StatusBtn>
        <StatusBtn $w={38} $ml={1}>对象追踪</StatusBtn>
        <StatusBtn $w={22} $ml={1} $latin>DUCS</StatusBtn>
        <StatusBtn $w={17} $on $ml={1} $latin>DYN</StatusBtn>
        <StatusBtn $w={23}>线宽</StatusBtn>
        <Slot $w={16}><Icon n="cmdIcon" s={12} /></Slot>
        <Slot $w={16}><Icon n="annot" s={12} /></Slot>
        <Slot $w={10}><Icon n="arrowsV" s={10} /></Slot>
        <StatusTools>
          <Slot $w={14}><Icon n="trayA" s={11} /></Slot>
          <Slot $w={14}><Icon n="trayB" s={12} /></Slot>
          <Slot $w={14}><Icon n="shirt" s={12} /></Slot>
          <Slot $w={14}><Icon n="wrench" s={12} /></Slot>
        </StatusTools>
      </StatusBar>
      <Taskbar>
        <StartBtn>
          <Icon n="start" s={13} />
          开始
        </StartBtn>
        <TaskBtn><Icon n="sogou" s={12} />高级编辑器_百度...</TaskBtn>
        <TaskBtn><Icon n="calcDoc" s={12} />计算器</TaskBtn>
        <TaskBtn><Icon n="acad" s={12} />AutoCAD 2008 - [...</TaskBtn>
        <Tray>
          <Icon n="backArrow" s={12} />
          <Icon n="qq" s={13} />
          <TrayTime>14:12</TrayTime>
        </Tray>
      </Taskbar>
      <Badge />
      <Watermark>
        <svg width="36" height="36" viewBox="0 0 36 36">
          <path d="M8 3C4 5 3 7 3 12v12c0 5 1 7 5 9" fill="none" stroke="#c8cad0" strokeWidth="3.5" strokeLinecap="round" />
          <path d="M9 5c3-2 5-2 8 0l14 9c3 2 3 6 0 8l-14 9c-3 2-5 2-7 0" fill="none" stroke="#c8cad0" strokeWidth="3.5" strokeLinecap="round" />
          <path d="M13 13l8 5-8 5z" fill="#c8cad0" />
          <path d="M23 13v10" stroke="#c8cad0" strokeWidth="2" />
        </svg>
        <WmText>
          <WmTitle>溜溜自学</WmTitle>
          <WmUrl>ZIXUE.3D66.COM</WmUrl>
        </WmText>
      </Watermark>
    </Root>
  );
}
